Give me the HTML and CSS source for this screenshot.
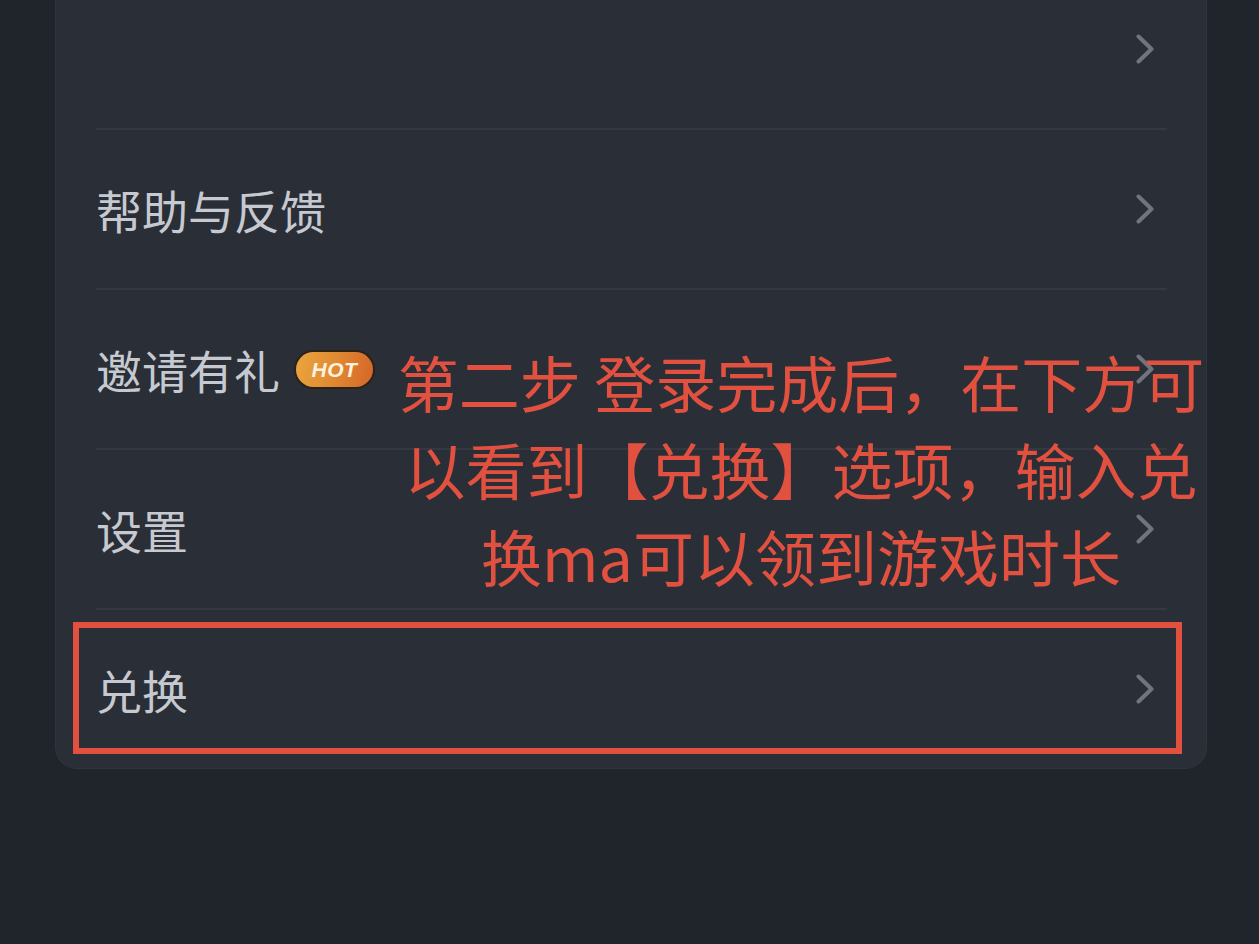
FILE: index.html
```html
<!DOCTYPE html>
<html lang="zh-CN">
<head>
<meta charset="utf-8">
<title>兑换</title>
<link rel="stylesheet" href="styles.css">
</head>
<body>
<div class="page">
  <div class="card">
    <div class="row">
      <span class="label"></span>
      <svg class="chev" viewBox="0 0 18 30" width="18" height="30"><path d="M2.5 2.5 L15.5 15 L2.5 27.5" /></svg>
    </div>
    <div class="row">
      <span class="label">帮助与反馈</span>
      <svg class="chev" viewBox="0 0 18 30" width="18" height="30"><path d="M2.5 2.5 L15.5 15 L2.5 27.5" /></svg>
    </div>
    <div class="row">
      <span class="label">邀请有礼<span class="hot">HOT</span></span>
      <svg class="chev" viewBox="0 0 18 30" width="18" height="30"><path d="M2.5 2.5 L15.5 15 L2.5 27.5" /></svg>
    </div>
    <div class="row">
      <span class="label">设置</span>
      <svg class="chev" viewBox="0 0 18 30" width="18" height="30"><path d="M2.5 2.5 L15.5 15 L2.5 27.5" /></svg>
    </div>
    <div class="row row-last">
      <span class="label">兑换</span>
      <svg class="chev" viewBox="0 0 18 30" width="18" height="30"><path d="M2.5 2.5 L15.5 15 L2.5 27.5" /></svg>
    </div>
  </div>
  <div class="note">第二步 登录完成后，在下方可<br>以看到【兑换】选项，输入兑<br>换ma可以领到游戏时长</div>
</div>
</body>
</html>
```
FILE: styles.css
```css
html, body {
  margin: 0;
  padding: 0;
  background: #20252c;
  width: 1259px;
  height: 944px;
  overflow: hidden;
}

.page {
  position: relative;
  width: 1259px;
  height: 944px;
  font-family: "Noto Sans CJK SC", "Noto Sans", sans-serif;
}

.card {
  margin: -30px 0 0 55px;
  width: 1152px;
  box-sizing: border-box;
  background: #2a2f37;
  border-radius: 0 0 22px 22px;
  border: 1px solid #30353d;
  border-top: none;
  padding: 0 39px 0 40px;
}

.row {
  position: relative;
  height: 158px;
  display: flex;
  align-items: center;
  justify-content: space-between;
  border-bottom: 2px solid #343941;
  padding-right: 13px;
}

.row-last {
  border-bottom: none;
}

.row-last::after {
  content: "";
  position: absolute;
  left: -23px;
  right: -15px;
  top: 12px;
  bottom: 14px;
  border: 6px solid #e2513f;
  box-sizing: border-box;
}

.label {
  display: flex;
  align-items: center;
  font-size: 46px;
  color: #c6cad0;
  line-height: 1;
}

.hot {
  display: inline-flex;
  align-items: center;
  justify-content: center;
  margin-left: 16px;
  width: 77px;
  height: 35px;
  border-radius: 18px;
  background: linear-gradient(100deg, #eaa53e 0%, #e08a32 50%, #d4652a 100%);
  box-shadow: 0 0 0 2px #2c2216;
  color: #fdf2df;
  font-family: "Liberation Sans", Arial, sans-serif;
  font-weight: bold;
  font-style: italic;
  font-size: 21px;
  letter-spacing: 0.5px;
}

.chev {
  display: block;
}

.chev path {
  fill: none;
  stroke: #6f757d;
  stroke-width: 4;
  stroke-linecap: round;
  stroke-linejoin: round;
}

.note {
  position: absolute;
  left: 360px;
  top: 368px;
  width: 882px;
  text-align: center;
  white-space: nowrap;
  color: #e2513f;
  font-size: 61px;
  line-height: 87px;
}
```
